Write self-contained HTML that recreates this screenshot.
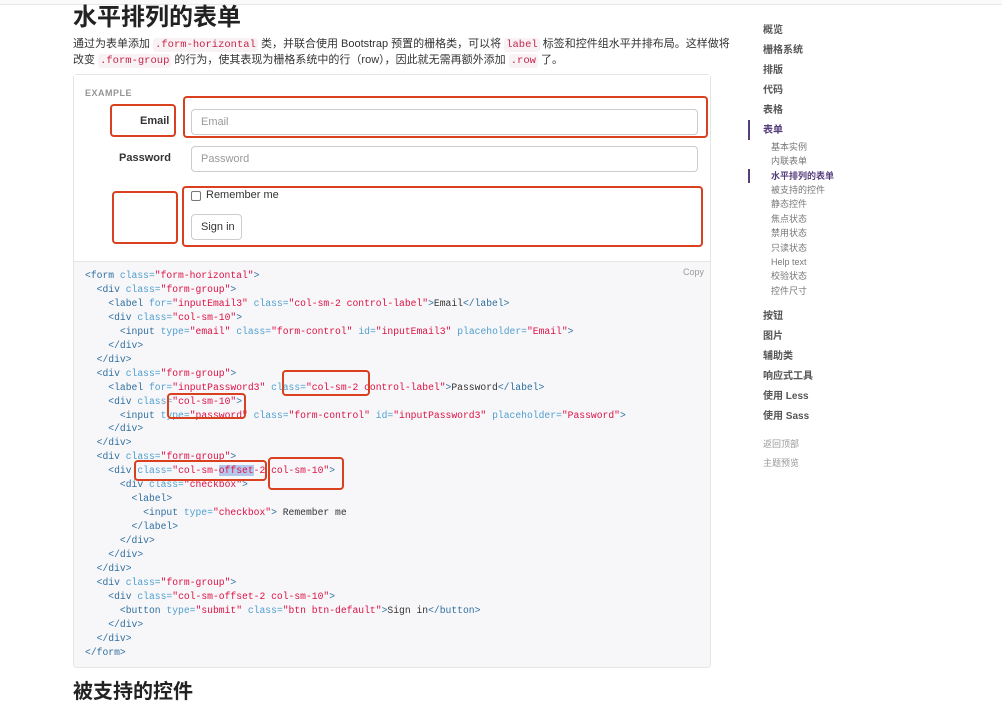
<!DOCTYPE html>
<html><head><meta charset="utf-8"><style>
*{margin:0;padding:0;box-sizing:border-box}
body{width:1002px;height:688px;background:#fff;position:relative;overflow:hidden;font-family:"Liberation Sans","Noto Sans CJK SC",sans-serif;color:#333}
.abs{position:absolute;white-space:nowrap}
code{font-family:"Liberation Mono",monospace;font-size:10.5px;background:#f9f2f4;color:#c7254e;padding:1px 2px;border-radius:3px}
.red{position:absolute;border:2px solid #d8401f;border-radius:4px}
.inp{position:absolute;border:1px solid #ccc;border-radius:4px;height:26px;font-size:11px;color:#999;padding:6px 9px;background:#fff}
pre{position:absolute;left:85px;top:269px;font-family:"Liberation Mono",monospace;font-size:9.7px;line-height:13.95px;color:#333}
.t{color:#2f6f9f}.a{color:#4f9fcf}.s{color:#d14}
.nav{position:absolute;left:763px;font-size:10px;line-height:12px;font-weight:bold;color:#555;white-space:nowrap}
.sub{position:absolute;left:771px;font-size:9px;line-height:11px;color:#777;white-space:nowrap}
</style></head><body>
<div class="abs" style="left:0;top:0;width:1002px;height:5px;border-bottom:1px solid #e8e8e8;background:#fafafa"></div>
<div class="abs" style="left:73px;top:3px;font-size:24px;line-height:30px;font-weight:bold;color:#222">水平排列的表单</div>
<div class="abs" style="left:73px;top:37px;width:660px;white-space:normal;font-size:11px;line-height:15px;color:#333">通过为表单添加 <code>.form-horizontal</code> 类，并联合使用 Bootstrap 预置的栅格类，可以将 <code>label</code> 标签和控件组水平并排布局。这样做将<br>改变 <code>.form-group</code> 的行为，使其表现为栅格系统中的行（row），因此就无需再额外添加 <code>.row</code> 了。</div>
<div class="abs" style="left:73px;top:74px;width:638px;height:594px;border:1px solid #e5e5e5;border-radius:4px;background:#f7f7f9"></div>
<div class="abs" style="left:74px;top:75px;width:636px;height:187px;background:#fff;border-bottom:1px solid #e5e5e5"></div>
<div class="abs" style="left:85px;top:88px;font-size:9px;font-weight:bold;color:#959595;letter-spacing:.5px">EXAMPLE</div>
<div class="abs" style="left:140px;top:115px;font-size:11px;font-weight:bold;color:#333">Email</div>
<div class="abs" style="left:119px;top:152px;font-size:11px;font-weight:bold;color:#333">Password</div>
<div class="inp" style="left:191px;top:109px;width:507px">Email</div>
<div class="inp" style="left:191px;top:146px;width:507px">Password</div>
<div class="abs" style="left:191px;top:191px;width:10px;height:10px;border:1px solid #777;border-radius:2px"></div>
<div class="abs" style="left:206px;top:189px;font-size:11px;color:#333">Remember me</div>
<div class="abs" style="left:191px;top:214px;width:51px;height:26px;border:1px solid #ccc;border-radius:4px;font-size:11px;padding:6px 9px;color:#333">Sign in</div>
<div class="red" style="left:110px;top:104px;width:66px;height:33px"></div>
<div class="red" style="left:183px;top:96px;width:525px;height:42px"></div>
<div class="red" style="left:112px;top:191px;width:66px;height:53px"></div>
<div class="red" style="left:182px;top:186px;width:521px;height:61px"></div>
<div class="abs" style="left:683px;top:267px;font-size:9px;color:#999">Copy</div>
<pre><span class="t">&lt;form</span> <span class="a">class=</span><span class="s">"form-horizontal"</span><span class="t">&gt;</span>
  <span class="t">&lt;div</span> <span class="a">class=</span><span class="s">"form-group"</span><span class="t">&gt;</span>
    <span class="t">&lt;label</span> <span class="a">for=</span><span class="s">"inputEmail3"</span> <span class="a">class=</span><span class="s">"col-sm-2 control-label"</span><span class="t">&gt;</span>Email<span class="t">&lt;/label&gt;</span>
    <span class="t">&lt;div</span> <span class="a">class=</span><span class="s">"col-sm-10"</span><span class="t">&gt;</span>
      <span class="t">&lt;input</span> <span class="a">type=</span><span class="s">"email"</span> <span class="a">class=</span><span class="s">"form-control"</span> <span class="a">id=</span><span class="s">"inputEmail3"</span> <span class="a">placeholder=</span><span class="s">"Email"</span><span class="t">&gt;</span>
    <span class="t">&lt;/div&gt;</span>
  <span class="t">&lt;/div&gt;</span>
  <span class="t">&lt;div</span> <span class="a">class=</span><span class="s">"form-group"</span><span class="t">&gt;</span>
    <span class="t">&lt;label</span> <span class="a">for=</span><span class="s">"inputPassword3"</span> <span class="a">class=</span><span class="s">"col-sm-2 control-label"</span><span class="t">&gt;</span>Password<span class="t">&lt;/label&gt;</span>
    <span class="t">&lt;div</span> <span class="a">class=</span><span class="s">"col-sm-10"</span><span class="t">&gt;</span>
      <span class="t">&lt;input</span> <span class="a">type=</span><span class="s">"password"</span> <span class="a">class=</span><span class="s">"form-control"</span> <span class="a">id=</span><span class="s">"inputPassword3"</span> <span class="a">placeholder=</span><span class="s">"Password"</span><span class="t">&gt;</span>
    <span class="t">&lt;/div&gt;</span>
  <span class="t">&lt;/div&gt;</span>
  <span class="t">&lt;div</span> <span class="a">class=</span><span class="s">"form-group"</span><span class="t">&gt;</span>
    <span class="t">&lt;div</span> <span class="a">class=</span><span class="s">"col-sm-<span style="background:#b4c8ee">offset</span>-2 col-sm-10"</span><span class="t">&gt;</span>
      <span class="t">&lt;div</span> <span class="a">class=</span><span class="s">"checkbox"</span><span class="t">&gt;</span>
        <span class="t">&lt;label&gt;</span>
          <span class="t">&lt;input</span> <span class="a">type=</span><span class="s">"checkbox"</span><span class="t">&gt;</span> Remember me
        <span class="t">&lt;/label&gt;</span>
      <span class="t">&lt;/div&gt;</span>
    <span class="t">&lt;/div&gt;</span>
  <span class="t">&lt;/div&gt;</span>
  <span class="t">&lt;div</span> <span class="a">class=</span><span class="s">"form-group"</span><span class="t">&gt;</span>
    <span class="t">&lt;div</span> <span class="a">class=</span><span class="s">"col-sm-offset-2 col-sm-10"</span><span class="t">&gt;</span>
      <span class="t">&lt;button</span> <span class="a">type=</span><span class="s">"submit"</span> <span class="a">class=</span><span class="s">"btn btn-default"</span><span class="t">&gt;</span>Sign in<span class="t">&lt;/button&gt;</span>
    <span class="t">&lt;/div&gt;</span>
  <span class="t">&lt;/div&gt;</span>
<span class="t">&lt;/form&gt;</span></pre>
<div class="red" style="left:282px;top:370px;width:88px;height:26px"></div>
<div class="red" style="left:167px;top:393px;width:79px;height:26px"></div>
<div class="red" style="left:134px;top:460px;width:133px;height:21px"></div>
<div class="red" style="left:268px;top:457px;width:76px;height:33px"></div>
<div class="abs" style="left:73px;top:682px;font-size:20px;font-weight:bold;color:#222;line-height:20px">被支持的控件</div>
<div class="abs" style="left:748px;top:120px;width:2px;height:20px;background:#563d7c"></div>
<div class="abs" style="left:748px;top:169px;width:2px;height:14px;background:#563d7c"></div>
<div class="nav" style="top:25px">概览</div>
<div class="nav" style="top:45px">栅格系统</div>
<div class="nav" style="top:65px">排版</div>
<div class="nav" style="top:85px">代码</div>
<div class="nav" style="top:105px">表格</div>
<div class="nav" style="top:125px;color:#563d7c">表单</div>
<div class="sub" style="top:142px">基本实例</div>
<div class="sub" style="top:156px">内联表单</div>
<div class="sub" style="top:171px;color:#563d7c;font-weight:bold">水平排列的表单</div>
<div class="sub" style="top:185px">被支持的控件</div>
<div class="sub" style="top:199px">静态控件</div>
<div class="sub" style="top:214px">焦点状态</div>
<div class="sub" style="top:228px">禁用状态</div>
<div class="sub" style="top:243px">只读状态</div>
<div class="sub" style="top:257px">Help text</div>
<div class="sub" style="top:271px">校验状态</div>
<div class="sub" style="top:286px">控件尺寸</div>
<div class="nav" style="top:311px">按钮</div>
<div class="nav" style="top:331px">图片</div>
<div class="nav" style="top:351px">辅助类</div>
<div class="nav" style="top:371px">响应式工具</div>
<div class="nav" style="top:391px">使用 Less</div>
<div class="nav" style="top:411px">使用 Sass</div>
<div class="nav" style="top:438px;font-weight:normal;color:#999;font-size:9px">返回顶部</div>
<div class="nav" style="top:457px;font-weight:normal;color:#999;font-size:9px">主题预览</div>
</body></html>
